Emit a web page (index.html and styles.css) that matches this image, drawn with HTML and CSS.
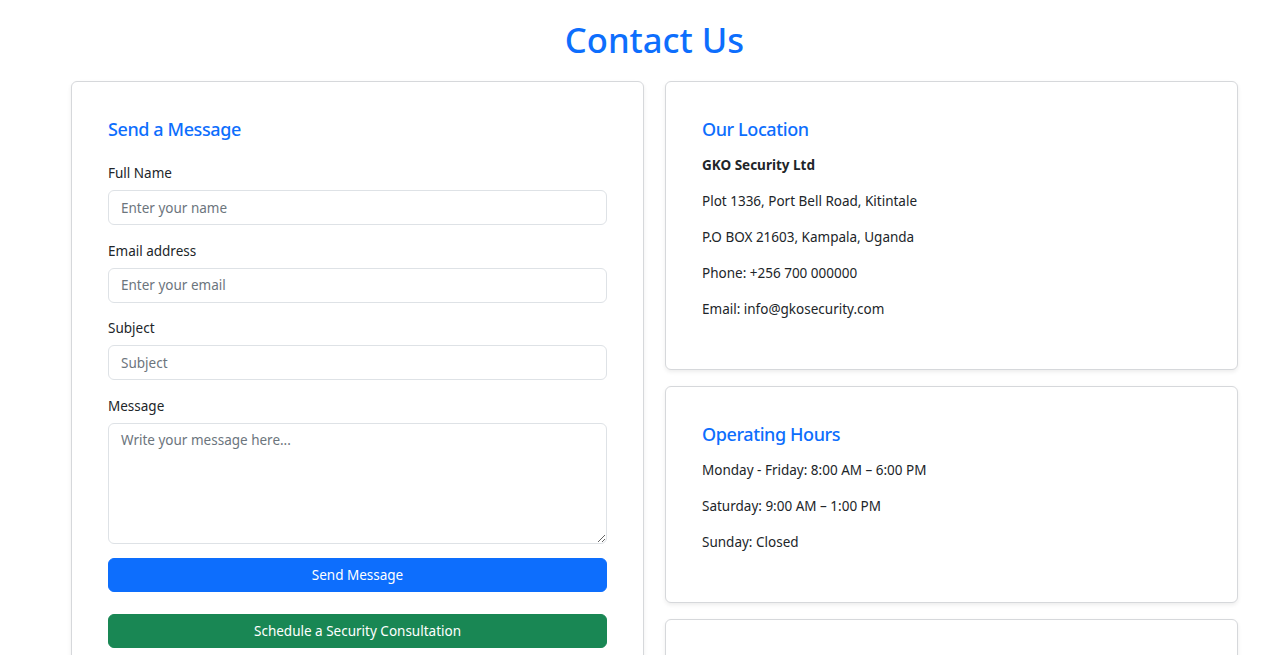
FILE: index.html
```html
<!DOCTYPE html>
<html lang="en">
<head>
<meta charset="utf-8">
<title>Contact Us</title>
<link rel="stylesheet" href="styles.css">
</head>
<body>
<main class="page">
  <h1 class="page-title">Contact Us</h1>
  <div class="layout">
    <section class="card form-card">
      <h4 class="card-title form-title">Send a Message</h4>
      <form class="contact-form">
        <div class="field">
          <label class="field-label" for="name">Full Name</label>
          <input class="field-input" id="name" type="text" placeholder="Enter your name">
        </div>
        <div class="field">
          <label class="field-label" for="email">Email address</label>
          <input class="field-input" id="email" type="email" placeholder="Enter your email">
        </div>
        <div class="field">
          <label class="field-label" for="subject">Subject</label>
          <input class="field-input" id="subject" type="text" placeholder="Subject">
        </div>
        <div class="field field-last">
          <label class="field-label" for="message">Message</label>
          <textarea class="field-input field-textarea" id="message" placeholder="Write your message here..."></textarea>
        </div>
        <button type="button" class="btn btn-primary">Send Message</button>
        <button type="button" class="btn btn-success">Schedule a Security Consultation</button>
      </form>
    </section>
    <div class="side">
      <section class="card">
        <h4 class="card-title">Our Location</h4>
        <p class="info strong">GKO Security Ltd</p>
        <p class="info">Plot 1336, Port Bell Road, Kitintale</p>
        <p class="info">P.O BOX 21603, Kampala, Uganda</p>
        <p class="info">Phone: +256 700 000000</p>
        <p class="info">Email: info@gkosecurity.com</p>
      </section>
      <section class="card">
        <h4 class="card-title">Operating Hours</h4>
        <p class="info">Monday - Friday: 8:00 AM – 6:00 PM</p>
        <p class="info">Saturday: 9:00 AM – 1:00 PM</p>
        <p class="info">Sunday: Closed</p>
      </section>
      <section class="card card-empty"></section>
    </div>
  </div>
</main>
</body>
</html>
```

FILE: styles.css
```css
* { box-sizing: border-box; }

body {
  margin: 0;
  background: #fff;
  color: #212529;
  font-family: "Noto Sans", "Open Sans", sans-serif;
  font-size: 13.5px;
  line-height: 21px;
}

.page {
  padding: 14px 36px 0 71px;
}

.page-title {
  margin: 0 0 15px;
  text-align: center;
  color: #0d6efd;
  font-size: 34.6px;
  font-weight: 500;
  line-height: 52px;
}

.layout {
  display: grid;
  grid-template-columns: 1fr 1fr;
  column-gap: 21px;
  align-items: start;
}

.side {
  display: flex;
  flex-direction: column;
  gap: 16px;
}

.card {
  background: #fff;
  border: 1px solid #d6d8db;
  border-radius: 6px;
  box-shadow: 0 2px 4px rgba(0, 0, 0, 0.075);
  padding: 35px 36px 34px;
}

.card-empty {
  height: 80px;
}

.card-title {
  margin: 0 0 14px;
  color: #0d6efd;
  font-size: 18px;
  font-weight: 500;
  letter-spacing: -0.4px;
  line-height: 24px;
}

.form-title {
  margin-bottom: 22px;
}

.info {
  margin: 0 0 15px;
}

.strong {
  font-weight: 700;
}

.field {
  margin-bottom: 15.6px;
}

.field-last {
  margin-bottom: 14px;
}

.field-label {
  display: block;
  margin-bottom: 6px;
}

.field-input {
  display: block;
  width: 100%;
  height: 35px;
  padding: 6px 12px;
  border: 1px solid #dee2e6;
  border-radius: 6px;
  font: inherit;
  color: #212529;
  background: #fff;
}

.field-input::placeholder {
  color: #6c757d;
}

.field-textarea {
  height: 121px;
  resize: vertical;
}

.btn {
  display: block;
  width: 100%;
  height: 34px;
  padding: 6px 12px;
  border: 1px solid transparent;
  border-radius: 6px;
  font: inherit;
  line-height: 20px;
  color: #fff;
  text-align: center;
}

.btn-primary {
  background: #0d6efd;
  border-color: #0d6efd;
  margin-bottom: 22px;
}

.btn-success {
  background: #198754;
  border-color: #198754;
}
```
